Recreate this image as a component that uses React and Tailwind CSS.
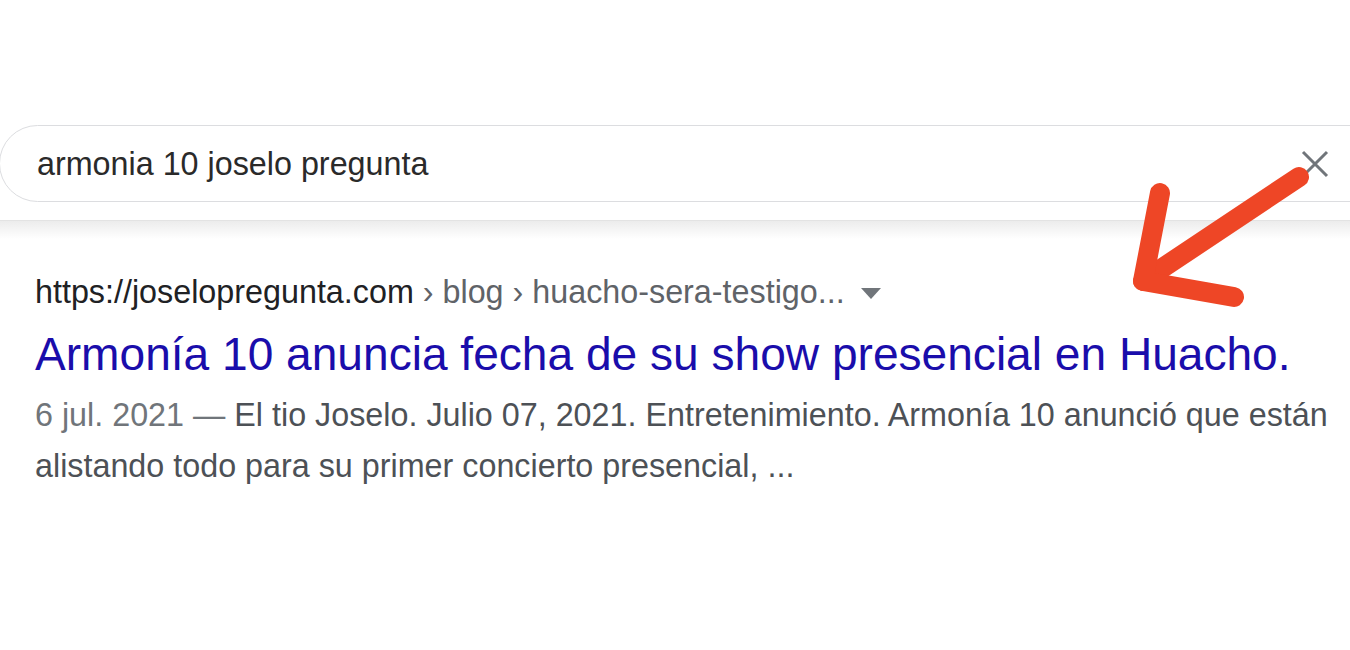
import React from 'react';

// search result card with the red arrow annotation

function ClearIcon() {
  return (
    <svg width="28" height="28" viewBox="0 0 28 28" className="shrink-0">
      <path d="M2 2 L26 26 M26 2 L2 26" stroke="#70757a" strokeWidth="3" strokeLinecap="butt" />
    </svg>
  );
}

function Arrow() {
  return (
    <svg className="absolute left-0 top-0 pointer-events-none" width="1350" height="650" viewBox="0 0 1350 650">
      <g stroke="#ee4626" strokeWidth="20" strokeLinecap="round" strokeLinejoin="round" fill="none">
        <path d="M1299 177 L1143 281" />
        <path d="M1160 193 L1143 281 L1234 297" />
      </g>
    </svg>
  );
}

export default function App() {
  const font = { fontFamily: '"Liberation Sans", Arial, sans-serif' };

  return (
    <div className="relative w-[1350px] h-[650px] overflow-hidden bg-white" style={font}>
      <div className="h-[221px] pt-[125px] border-b border-[#e3e3e3]">
        <div className="ml-[-1px] w-[1390px] h-[77px] rounded-full border border-[#dcdde0] bg-white flex items-center pl-[37px] pr-[59px]">
          <span className="flex-1 text-[32.3px] leading-[40px] text-[#2a2a2a]">armonia 10 joselo pregunta</span>
          <ClearIcon />
        </div>
      </div>
      <div className="h-[18px] bg-linear-to-b from-[#ececec] to-white" />

      <div className="pl-[35px] mt-[31px] w-[1340px]">
        <div className="flex items-center text-[32.3px] leading-[44px]">
          <span className="text-[#202124]">https://joselopregunta.com</span>
          <span className="text-[#5f6368]">&nbsp;› blog › huacho-sera-testigo...</span>
          <svg width="20" height="11" viewBox="0 0 20 11" className="ml-[16px] mt-[2px]">
            <path d="M0 0 L20 0 L10 11 Z" fill="#70757a" />
          </svg>
        </div>
        <div className="mt-[10px] text-[46.1px] leading-[60px] text-[#1a0dab]">
          Armonía 10 anuncia fecha de su show presencial en Huacho.
        </div>
        <p className="mt-[6px] w-[1305px] text-[32.3px] leading-[51px] text-[#4d5156]">
          <span className="text-[#70757a]">6 jul. 2021 — </span>
          El tio Joselo. Julio 07, 2021. Entretenimiento. Armonía 10 anunció que están alistando todo para su primer concierto presencial, ...
        </p>
      </div>

      <Arrow />
    </div>
  );
}
